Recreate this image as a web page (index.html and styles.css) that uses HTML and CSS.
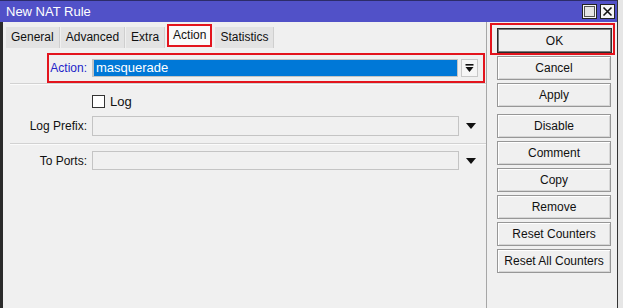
FILE: index.html
```html
<!DOCTYPE html>
<html lang="en">
  <head>
    <meta charset="UTF-8" />
    <meta name="viewport" content="width=device-width, initial-scale=1.0" />
    <title>New NAT Rule</title>
    <link rel="stylesheet" href="styles.css">
  </head>
  <body>
    <div class="screen">
      <div class="window">
        <div class="titlebar">
          <span class="title">New NAT Rule</span>
          <div class="win-btns">
            <span class="win-btn">
              <svg width="15" height="15" viewBox="0 0 15 15">
                <rect x="0.5" y="0.5" width="14" height="14" fill="#f4f4f4" stroke="#222" />
                <rect x="2.5" y="2.5" width="10" height="10" fill="#e4e4e4" stroke="#555" />
              </svg>
            </span>
            <span class="win-btn">
              <svg width="15" height="15" viewBox="0 0 15 15">
                <rect x="0.5" y="0.5" width="14" height="14" fill="#f4f4f4" stroke="#222" />
                <path d="M3.5 3.5 L11.5 11.5 M11.5 3.5 L3.5 11.5" stroke="#111" stroke-width="1.6" />
              </svg>
            </span>
          </div>
        </div>

        <div class="body">
          <div class="main">
            <div class="tabs">
              <span class="tab">General</span>
              <span class="tab">Advanced</span>
              <span class="tab">Extra</span>
              <span class="tab active">Action</span>
              <span class="tab">Statistics</span>
            </div>

            <div class="form">
              <div class="row row-action">
                <label class="lbl lbl-blue">Action:</label>
                <div class="field field-selected">masquerade</div>
                <span class="drop-btn">
                  <svg width="9" height="9" viewBox="0 0 9 9">
                    <rect x="0.5" y="0" width="8" height="1.6" fill="#111" />
                    <path d="M0.5 3 L8.5 3 L4.5 8 Z" fill="#111" />
                  </svg>
                </span>
              </div>
              <div class="sep"></div>

              <div class="row row-check">
                <span class="checkbox"></span>
                <span class="check-text">Log</span>
              </div>

              <div class="row row-prefix">
                <label class="lbl">Log Prefix:</label>
                <div class="field field-tall"></div>
                <span class="arrow">
                  <svg width="10" height="6" viewBox="0 0 10 6"><path d="M0 0 L10 0 L5 6 Z" fill="#111" /></svg>
                </span>
              </div>
              <div class="sep sep-lower"></div>

              <div class="row row-ports">
                <label class="lbl">To Ports:</label>
                <div class="field"></div>
                <span class="arrow">
                  <svg width="10" height="6" viewBox="0 0 10 6"><path d="M0 0 L10 0 L5 6 Z" fill="#111" /></svg>
                </span>
              </div>
            </div>
          </div>

          <div class="side">
            <div class="ok-mark"><button class="btn btn-ok">OK</button></div>
            <button class="btn btn-first">Cancel</button>
            <button class="btn">Apply</button>
            <button class="btn btn-group">Disable</button>
            <button class="btn">Comment</button>
            <button class="btn">Copy</button>
            <button class="btn">Remove</button>
            <button class="btn">Reset Counters</button>
            <button class="btn">Reset All Counters</button>
          </div>
        </div>
      </div>
      <div class="behind"></div>
    </div>
  </body>
</html>
```

FILE: styles.css
```css
body {
  margin: 0;
  font-family: "Liberation Sans", Arial, sans-serif;
  font-size: 12px;
  color: #111;
  background: #f0f0f0;
  overflow: hidden;
}
.screen {
  display: flex;
  width: 623px;
  height: 308px;
}
.window {
  width: 617px;
  display: flex;
  flex-direction: column;
}
.titlebar {
  height: 22px;
  box-sizing: border-box;
  background: #5151c8;
  border-top: 1px solid #2c2c6a;
  display: flex;
  align-items: center;
  justify-content: space-between;
  padding: 0 2px 0 6px;
}
.title {
  color: #fff;
  font-size: 13px;
}
.win-btns {
  display: flex;
  gap: 3px;
}
.win-btn {
  display: block;
  height: 15px;
}
.win-btn svg {
  display: block;
}
.body {
  flex: 1;
  display: flex;
  border-left: 3px solid #2b2b2b;
}
.main {
  width: 483px;
}
.tabs {
  display: flex;
  align-items: flex-start;
  padding: 5px 0 0 3px;
  height: 21px;
}
.tab {
  height: 21px;
  line-height: 21px;
  padding: 0 5px;
  background: #e3e3e3;
  border-right: 1px solid #cfcfcf;
  margin-right: 1px;
}
.tab.active {
  box-sizing: border-box;
  height: 23px;
  line-height: 19px;
  margin: -3px 3px 0 1px;
  padding: 0 4px;
  background: #fafafa;
  border: 2px solid #e3141d;
}
.form {
  padding-top: 5px;
}
.row {
  display: flex;
  align-items: center;
}
.lbl {
  width: 85px;
  box-sizing: border-box;
  text-align: right;
  padding-right: 1px;
}
.lbl-blue {
  color: #2424c8;
}
.field {
  margin-left: 4px;
  width: 367px;
  height: 19px;
  box-sizing: border-box;
  border: 1px solid #c4c4c4;
  background: #f0f0f0;
}
.field-tall {
  height: 20px;
}
.field-selected {
  width: 366px;
  height: 18px;
  line-height: 16px;
  padding-left: 2px;
  border-left: 2px solid #c4c4c4;
  background: #0078d7;
  color: #fff;
  font-size: 13px;
}
.row-action {
  margin-left: 44px;
  width: 438px;
  height: 30px;
  box-sizing: border-box;
  border: 2px solid #e3141d;
}
.row-action .lbl {
  width: 39px;
}
.drop-btn {
  margin-left: 3px;
  width: 17px;
  height: 18px;
  box-sizing: border-box;
  border: 1px solid #c8c8c8;
  background: #f6f6f6;
  display: flex;
  align-items: center;
  justify-content: center;
}
.drop-btn svg {
  display: block;
}
.sep {
  margin-left: 7px;
  height: 1px;
  background: #d2d2d2;
  border-bottom: 1px solid #fbfbfb;
}
.sep-lower {
  margin-top: 7px;
}
.row-check {
  margin-top: 10px;
  padding-left: 89px;
  height: 13px;
}
.checkbox {
  width: 13px;
  height: 13px;
  box-sizing: border-box;
  border: 1px solid #333;
  background: #fff;
}
.check-text {
  margin-left: 5px;
  font-size: 13px;
}
.row-prefix {
  margin-top: 8px;
}
.row-ports {
  margin-top: 6px;
}
.arrow {
  width: 24px;
  display: flex;
  justify-content: center;
}
.arrow svg {
  display: block;
}
.side {
  width: 130px;
  border-left: 1px solid #a6a6a6;
  padding: 1px 0 0 10px;
  box-sizing: border-box;
  display: flex;
  flex-direction: column;
  align-items: flex-start;
}
.ok-mark {
  margin-left: -7px;
  padding: 3px 1px 0 5px;
  border: 2px solid #e3141d;
}
.btn {
  display: block;
  width: 114px;
  height: 24px;
  margin: 0 0 3px;
  padding: 0;
  font-family: "Liberation Sans", Arial, sans-serif;
  font-size: 12px;
  color: #111;
  background: #f0f0f0;
  border: 1px solid #979797;
  box-shadow: inset 1px 1px 0 #fff, inset -1px -1px 0 #d6d6d6;
}
.btn-ok {
  width: 115px;
  height: 25px;
  margin: 0;
  border: 1px solid #2a2a2a;
  box-shadow: inset 0 0 0 1px #7a7a7a;
}
.btn-first {
  margin-top: 1px;
}
.btn-group {
  margin-top: 4px;
}
.behind {
  flex: 1;
  border-left: 1px solid #333;
  background: #e6e6e6;
}
```
